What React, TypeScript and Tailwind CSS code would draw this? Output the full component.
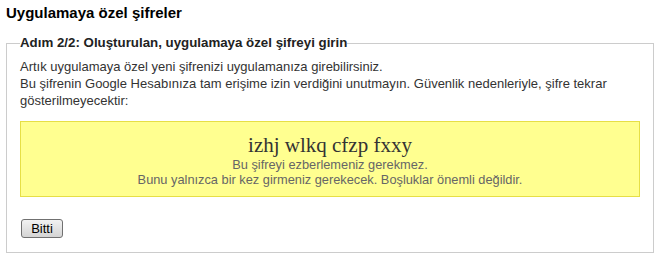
export default function App() {
  return (
    <div className="min-h-screen bg-white px-[6px] pt-[3px] font-['Liberation_Sans',Arial,sans-serif] text-[#222]">
      <h1 className="text-[15px] font-bold leading-[20px] text-black">Uygulamaya özel şifreler</h1>
      <fieldset className="mt-[12px] w-[648px] border border-[#ccc] pl-[13px] pr-[12px] pb-[14px] pt-[7px]">
        <legend className="px-0 text-[13.3px] font-bold leading-[16px] text-[#222]">
          Adım 2/2: Oluşturulan, uygulamaya özel şifreyi girin
        </legend>
        <p className="text-[13px] leading-[17px] text-[#333]">
          Artık uygulamaya özel yeni şifrenizi uygulamanıza girebilirsiniz.
          <br />
          Bu şifrenin Google Hesabınıza tam erişime izin verdiğini unutmayın. Güvenlik nedenleriyle, şifre tekrar
          gösterilmeyecektir:
        </p>
        <div className="mt-[12px] w-[620px] border border-[#e6df46] bg-[#ffff90] pt-[11px] pb-[9px] text-center">
          <div className="font-['Liberation_Serif','Times_New_Roman',serif] text-[21px] leading-[24px] text-[#333]">
            izhj wlkq cfzp fxxy
          </div>
          <div className="text-[12.8px] leading-[15px] text-[#666]">
            Bu şifreyi ezberlemeniz gerekmez.
            <br />
            Bunu yalnızca bir kez girmeniz gerekecek. Boşluklar önemli değildir.
          </div>
        </div>
        <button className="mt-[22px] ml-[1px] flex h-[19px] w-[42px] items-center justify-center rounded-[3px] border border-[#707070] bg-gradient-to-b from-[#f2f2f2] to-[#d4d4d4] text-[13px] leading-none text-black">
          Bitti
        </button>
      </fieldset>
    </div>
  );
}
